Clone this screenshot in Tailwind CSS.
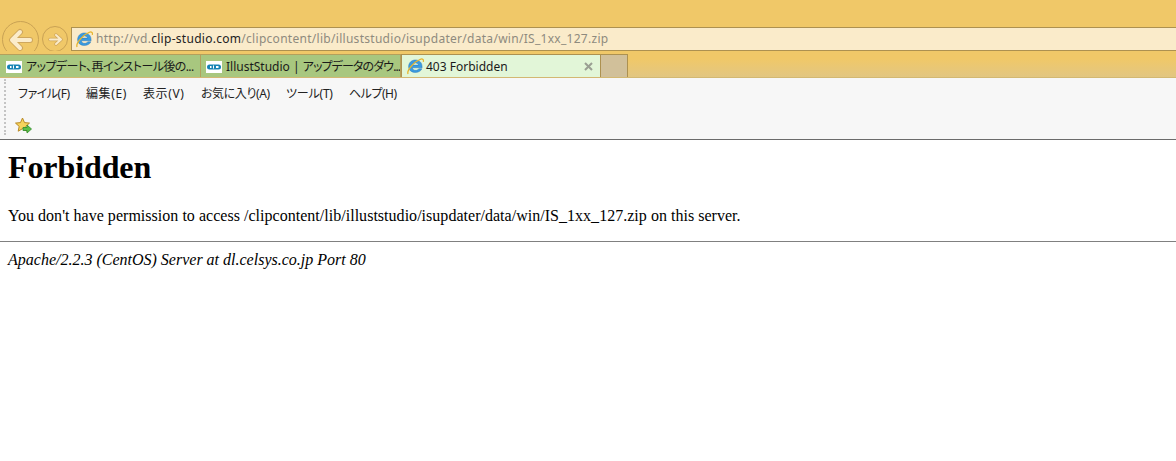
<!DOCTYPE html>
<html lang="ja">
<head>
<meta charset="utf-8">
<title>403 Forbidden</title>
<script src="https://cdn.jsdelivr.net/npm/@tailwindcss/browser@4"></script>
</head>
<body class="w-[1176px] h-[461px] overflow-hidden bg-white">
<div class="relative font-['Noto_Sans','Noto_Sans_CJK_JP',sans-serif] [font-feature-settings:'palt'] text-[12px] text-[#1a1a1a]">
  <div class="h-[27px] bg-[#f0c868]"></div>
  <div class="h-[24px] bg-[#f0c868] flex">
    <div class="w-[71px] shrink-0"></div>
    <div class="flex-1 flex items-center bg-[#faebca] border-y border-l border-[#ad9150] pl-[4px]">
      <svg class="w-[17px] h-[17px] shrink-0" viewBox="0 0 16 16"><use href="#ie"/></svg>
      <span class="ml-[3px] text-[12px] tracking-[0.285px] text-[#8e8a7e] whitespace-nowrap">http://vd.<span class="text-[#222]">clip-studio.com</span>/clipcontent/lib/illuststudio/isupdater/data/win/IS_1xx_127.zip</span>
    </div>
  </div>
  <div class="relative z-10 h-[27px] pt-[3px] flex bg-gradient-to-b from-[#f0c868] from-30% to-[#e2c681] border-b border-[#d3b872]">
    <div class="w-[201px] h-[23px] flex items-center bg-[#a8c77f] border-r border-t border-[#b4a05c] pl-[6px] pt-[1px]">
      <svg class="w-[16px] h-[12px] shrink-0" viewBox="0 0 16 12"><use href="#clip"/></svg>
      <span class="ml-[4px] whitespace-nowrap tracking-[-0.6px]">アップデート、再インストール後の...</span>
    </div>
    <div class="w-[200px] h-[23px] flex items-center bg-[#a8c77f] border-r border-t border-[#b4a05c] pl-[5px] pt-[1px] overflow-hidden">
      <svg class="w-[16px] h-[12px] shrink-0" viewBox="0 0 16 12"><use href="#clip"/></svg>
      <span class="ml-[4px] whitespace-nowrap">IllustStudio | <span class="tracking-[-0.9px]">アップデータのダウ...</span></span>
    </div>
    <div class="w-[200px] h-[23px] flex items-center bg-[#e2f6d8] border-x border-t border-[#ad9150] pl-[5px] pr-[6px] pt-[1px]">
      <svg class="w-[17px] h-[17px] shrink-0" viewBox="0 0 16 16"><use href="#ie"/></svg>
      <span class="ml-[2px] flex-1 whitespace-nowrap">403 Forbidden</span>
      <svg class="w-[9px] h-[9px] mr-[1px]" viewBox="0 0 9 9"><path d="M1 1l7 7M8 1l-7 7" stroke="#9a9f93" stroke-width="2"/></svg>
    </div>
    <div class="w-[27px] h-[23px] bg-[#d1c09a] border-r border-t border-[#ad9150]"></div>
  </div>
  <div class="relative z-10 h-[62px] bg-[#f7f7f7] border-b border-[#6b6b6b]">
    <div class="absolute left-[4px] top-[1px] h-[56px] border-l-2 border-dotted border-[#c4c4c4]"></div>
    <nav class="flex h-[32px] items-center pl-[18px] gap-[16px] whitespace-nowrap text-[12px] text-[#222]">
      <span class="w-[52px] tracking-[-0.5px]">ファイル(F)</span><span class="w-[41px] tracking-[0.6px]">編集(E)</span><span class="w-[42px] tracking-[0.6px]">表示(V)</span><span class="w-[69px] tracking-[-0.4px]">お気に入り(A)</span><span class="w-[47px] tracking-[-0.2px]">ツール(T)</span><span class="w-[48px] tracking-[-0.5px]">ヘルプ(H)</span>
    </nav>
    <div class="pl-[15px] pt-[7px]">
      <svg class="w-[17px] h-[17px]" viewBox="0 0 17 17">
        <path d="M7.500 1l2 4.600 5 .5-3.700 3.300 1 4.800-4.300-2.500-4.300 2.500 1-4.800L.5 6.100l5-.5z" fill="#f6d35c" stroke="#b98a26" stroke-width="1"/>
        <path d="M8 10.500h4V8l4.500 4-4.500 4v-2.500H8z" fill="#5cc04a" stroke="#2f8a2a" stroke-width=".8"/>
      </svg>
    </div>
  </div>

  <div class="absolute left-[2px] top-[21px] w-[37px] h-[37px] rounded-full border border-[#c9a254] flex items-center justify-center">
    <svg class="w-[26px] h-[24px]" viewBox="0 0 26 24"><path d="M12 4l-8 8 8 8M5 12h17" fill="none" stroke="#cfa75c" stroke-width="6" stroke-linecap="round" stroke-linejoin="round"/><path d="M12 4l-8 8 8 8M5 12h17" fill="none" stroke="#fbeccb" stroke-width="4" stroke-linecap="round" stroke-linejoin="round"/></svg>
  </div>
  <div class="absolute left-[42px] top-[26px] w-[26px] h-[26px] rounded-full border border-[#c9a254] flex items-center justify-center">
    <svg class="w-[17px] h-[15px]" viewBox="0 0 17 15"><path d="M9 3l5 4.500-5 4.500M13 7.500H3" fill="none" stroke="#cfa75c" stroke-width="3.500" stroke-linecap="round" stroke-linejoin="round"/><path d="M9 3l5 4.500-5 4.500M13 7.500H3" fill="none" stroke="#faebca" stroke-width="2" stroke-linecap="round" stroke-linejoin="round"/></svg>
  </div>
</div>

<main class="px-[8px] font-['Liberation_Serif',serif] text-black text-[16px]">
  <h1 class="text-[32px] font-bold leading-[37px] mt-[9px] tracking-[-0.1px]">Forbidden</h1>
  <p class="mt-[21px] leading-[18px] tracking-[0.026px]">You don't have permission to access /clipcontent/lib/illuststudio/isupdater/data/win/IS_1xx_127.zip on this server.</p>
  <hr class="-mx-[8px] mt-[16px] border-t border-[#808080]">
  <address class="mt-[9px] italic leading-[18px]">Apache/2.2.3 (CentOS) Server at dl.celsys.co.jp Port 80</address>
</main>

<svg class="hidden" width="0" height="0">
  <defs>
    <g id="ie">
      <path d="M1.500 8.200C1.500 4.300 4.500 1.800 8 1.800c3.800 0 6.200 2.800 6.200 6.400v1H5.100c.3 2.900 4.600 3.200 5.900 1h3c-2 5-12.500 4.600-12.500-2zM5.100 6.700h5.700C10.600 3.900 5.500 3.900 5.100 6.700z" fill="#3a9be0" stroke="#1f6fb5" stroke-width=".4"/>
      <path d="M1 15C-.5 12 6 4 12.500 1.200c2.300-.8 3.500.3 2.800 2.500" fill="none" stroke="#e6b52e" stroke-width="1.200"/>
    </g>
    <g id="clip">
      <rect width="16" height="12" fill="#fff"/>
      <rect x="1" y="3.500" width="14" height="5" rx="2.500" fill="#1683b5"/>
      <rect x="4" y="5" width="1.500" height="2" fill="#fff"/>
      <rect x="7" y="4.500" width="1" height="3" fill="#fff"/>
      <rect x="10" y="5" width="2.500" height="2" fill="#fff"/>
    </g>
  </defs>
</svg>
</body>
</html>
